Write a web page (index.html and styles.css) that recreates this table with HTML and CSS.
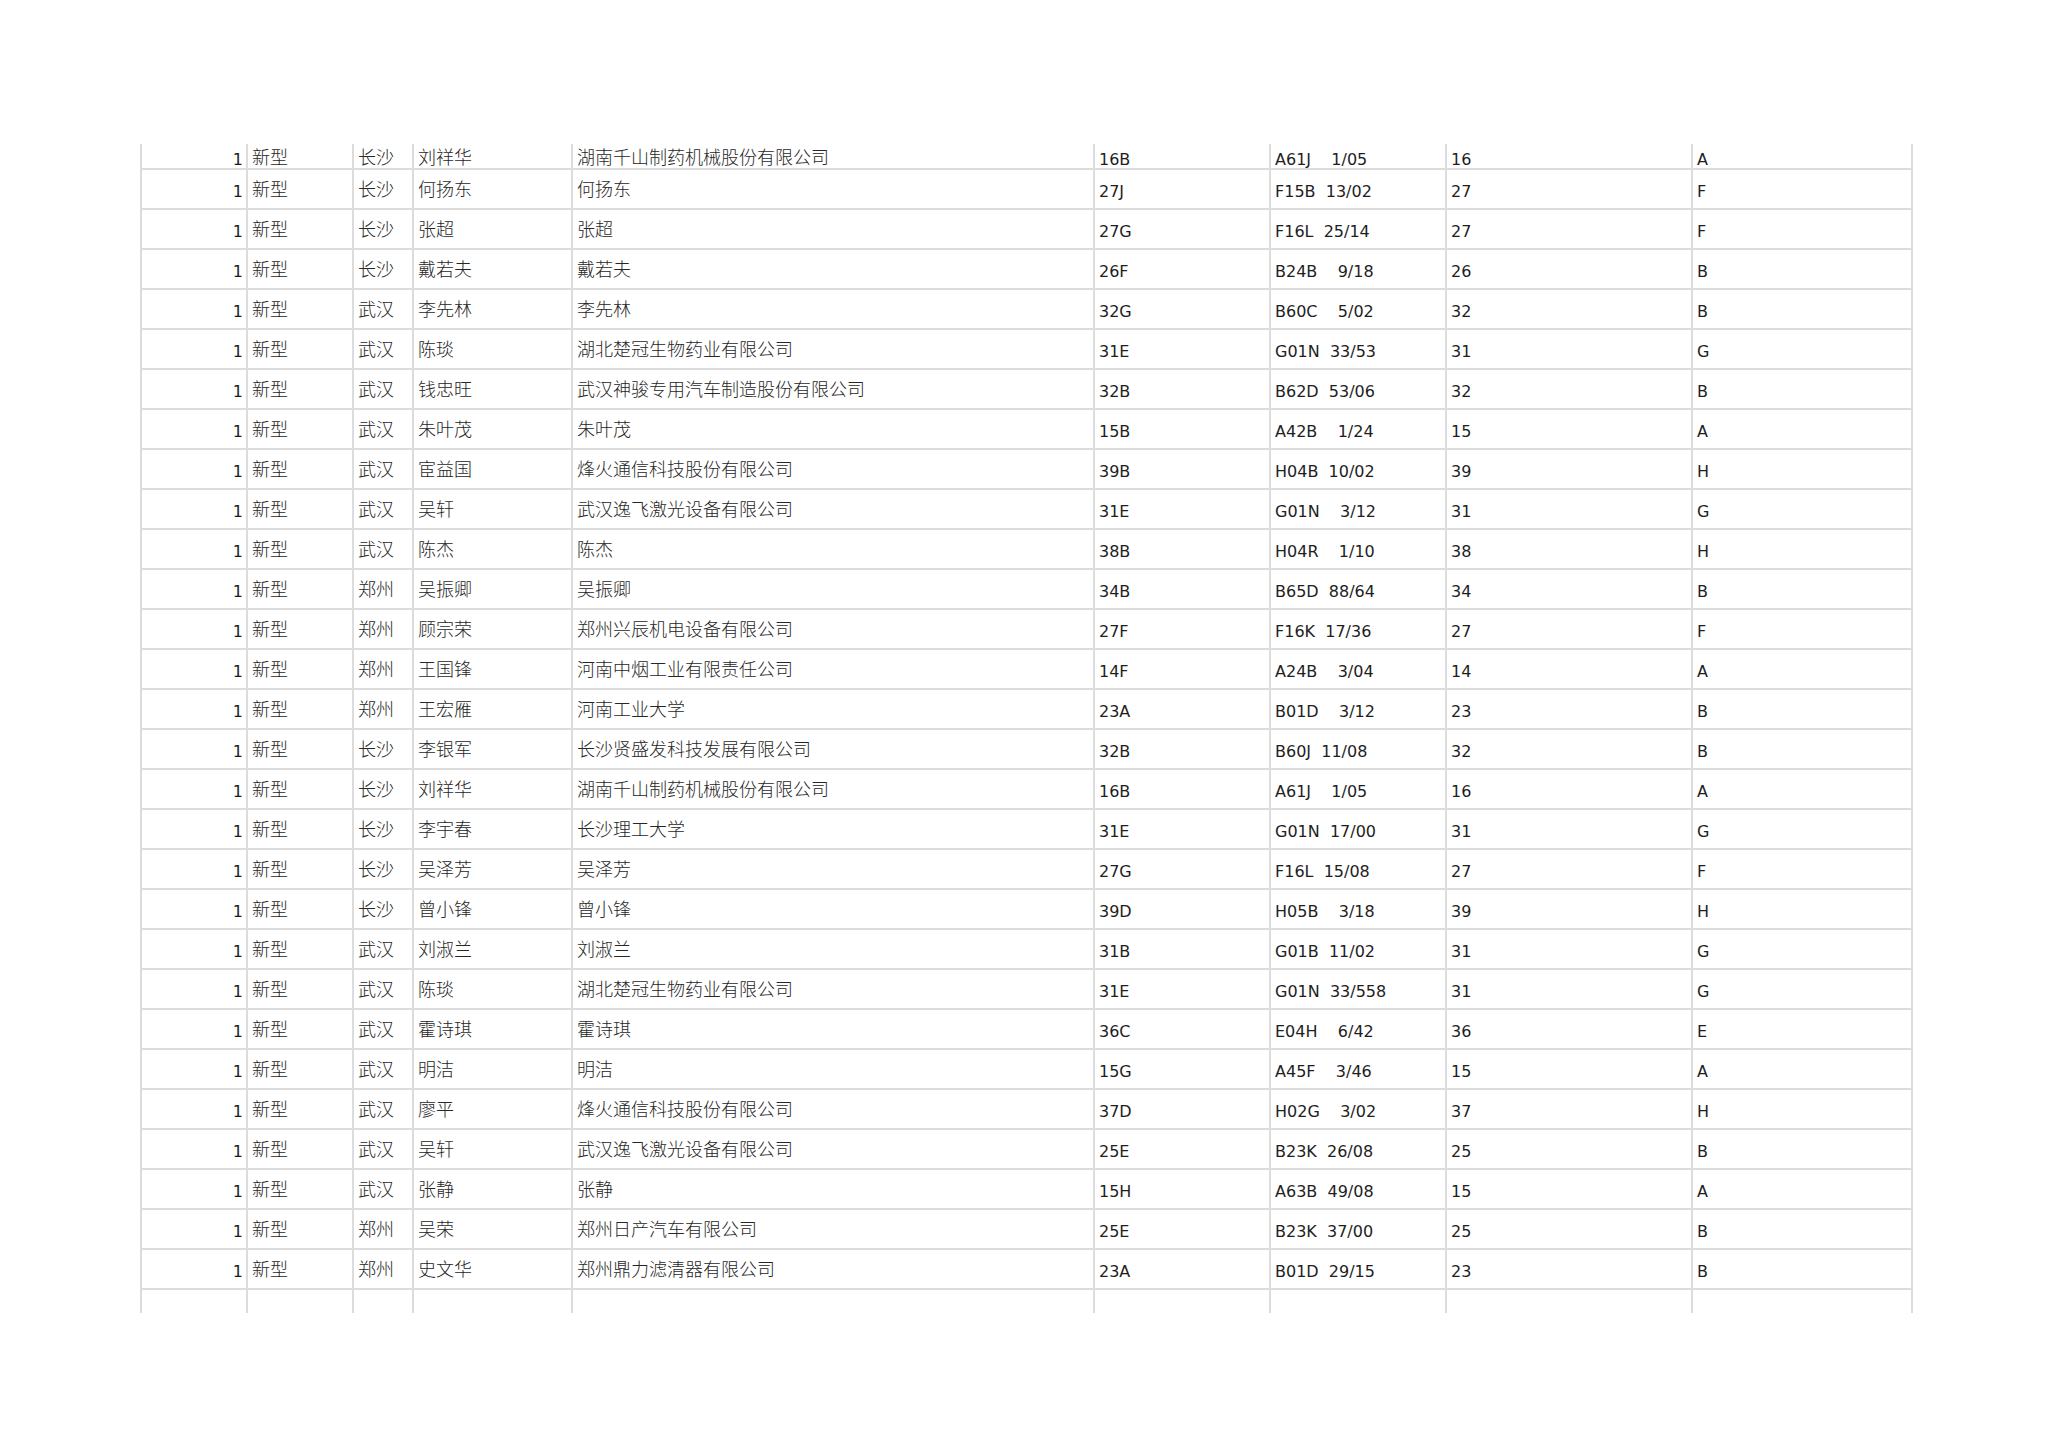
FILE: index.html
```html
<!DOCTYPE html>
<html lang="zh-CN">
<head>
<meta charset="utf-8">
<title>专利清单</title>
<link rel="stylesheet" href="styles.css">
</head>
<body>
<div class="sheet">
  <div class="row first"><div class="c num">1</div><div class="c cjk">新型</div><div class="c cjk">长沙</div><div class="c cjk">刘祥华</div><div class="c cjk">湖南千山制药机械股份有限公司</div><div class="c lat">16B</div><div class="c lat">A61J    1/05</div><div class="c lat">16</div><div class="c lat end">A</div></div>
  <div class="row"><div class="c num">1</div><div class="c cjk">新型</div><div class="c cjk">长沙</div><div class="c cjk">何扬东</div><div class="c cjk">何扬东</div><div class="c lat">27J</div><div class="c lat">F15B  13/02</div><div class="c lat">27</div><div class="c lat end">F</div></div>
  <div class="row"><div class="c num">1</div><div class="c cjk">新型</div><div class="c cjk">长沙</div><div class="c cjk">张超</div><div class="c cjk">张超</div><div class="c lat">27G</div><div class="c lat">F16L  25/14</div><div class="c lat">27</div><div class="c lat end">F</div></div>
  <div class="row"><div class="c num">1</div><div class="c cjk">新型</div><div class="c cjk">长沙</div><div class="c cjk">戴若夫</div><div class="c cjk">戴若夫</div><div class="c lat">26F</div><div class="c lat">B24B    9/18</div><div class="c lat">26</div><div class="c lat end">B</div></div>
  <div class="row"><div class="c num">1</div><div class="c cjk">新型</div><div class="c cjk">武汉</div><div class="c cjk">李先林</div><div class="c cjk">李先林</div><div class="c lat">32G</div><div class="c lat">B60C    5/02</div><div class="c lat">32</div><div class="c lat end">B</div></div>
  <div class="row"><div class="c num">1</div><div class="c cjk">新型</div><div class="c cjk">武汉</div><div class="c cjk">陈琰</div><div class="c cjk">湖北楚冠生物药业有限公司</div><div class="c lat">31E</div><div class="c lat">G01N  33/53</div><div class="c lat">31</div><div class="c lat end">G</div></div>
  <div class="row"><div class="c num">1</div><div class="c cjk">新型</div><div class="c cjk">武汉</div><div class="c cjk">钱忠旺</div><div class="c cjk">武汉神骏专用汽车制造股份有限公司</div><div class="c lat">32B</div><div class="c lat">B62D  53/06</div><div class="c lat">32</div><div class="c lat end">B</div></div>
  <div class="row"><div class="c num">1</div><div class="c cjk">新型</div><div class="c cjk">武汉</div><div class="c cjk">朱叶茂</div><div class="c cjk">朱叶茂</div><div class="c lat">15B</div><div class="c lat">A42B    1/24</div><div class="c lat">15</div><div class="c lat end">A</div></div>
  <div class="row"><div class="c num">1</div><div class="c cjk">新型</div><div class="c cjk">武汉</div><div class="c cjk">宦益国</div><div class="c cjk">烽火通信科技股份有限公司</div><div class="c lat">39B</div><div class="c lat">H04B  10/02</div><div class="c lat">39</div><div class="c lat end">H</div></div>
  <div class="row"><div class="c num">1</div><div class="c cjk">新型</div><div class="c cjk">武汉</div><div class="c cjk">吴轩</div><div class="c cjk">武汉逸飞激光设备有限公司</div><div class="c lat">31E</div><div class="c lat">G01N    3/12</div><div class="c lat">31</div><div class="c lat end">G</div></div>
  <div class="row"><div class="c num">1</div><div class="c cjk">新型</div><div class="c cjk">武汉</div><div class="c cjk">陈杰</div><div class="c cjk">陈杰</div><div class="c lat">38B</div><div class="c lat">H04R    1/10</div><div class="c lat">38</div><div class="c lat end">H</div></div>
  <div class="row"><div class="c num">1</div><div class="c cjk">新型</div><div class="c cjk">郑州</div><div class="c cjk">吴振卿</div><div class="c cjk">吴振卿</div><div class="c lat">34B</div><div class="c lat">B65D  88/64</div><div class="c lat">34</div><div class="c lat end">B</div></div>
  <div class="row"><div class="c num">1</div><div class="c cjk">新型</div><div class="c cjk">郑州</div><div class="c cjk">顾宗荣</div><div class="c cjk">郑州兴辰机电设备有限公司</div><div class="c lat">27F</div><div class="c lat">F16K  17/36</div><div class="c lat">27</div><div class="c lat end">F</div></div>
  <div class="row"><div class="c num">1</div><div class="c cjk">新型</div><div class="c cjk">郑州</div><div class="c cjk">王国锋</div><div class="c cjk">河南中烟工业有限责任公司</div><div class="c lat">14F</div><div class="c lat">A24B    3/04</div><div class="c lat">14</div><div class="c lat end">A</div></div>
  <div class="row"><div class="c num">1</div><div class="c cjk">新型</div><div class="c cjk">郑州</div><div class="c cjk">王宏雁</div><div class="c cjk">河南工业大学</div><div class="c lat">23A</div><div class="c lat">B01D    3/12</div><div class="c lat">23</div><div class="c lat end">B</div></div>
  <div class="row"><div class="c num">1</div><div class="c cjk">新型</div><div class="c cjk">长沙</div><div class="c cjk">李银军</div><div class="c cjk">长沙贤盛发科技发展有限公司</div><div class="c lat">32B</div><div class="c lat">B60J  11/08</div><div class="c lat">32</div><div class="c lat end">B</div></div>
  <div class="row"><div class="c num">1</div><div class="c cjk">新型</div><div class="c cjk">长沙</div><div class="c cjk">刘祥华</div><div class="c cjk">湖南千山制药机械股份有限公司</div><div class="c lat">16B</div><div class="c lat">A61J    1/05</div><div class="c lat">16</div><div class="c lat end">A</div></div>
  <div class="row"><div class="c num">1</div><div class="c cjk">新型</div><div class="c cjk">长沙</div><div class="c cjk">李宇春</div><div class="c cjk">长沙理工大学</div><div class="c lat">31E</div><div class="c lat">G01N  17/00</div><div class="c lat">31</div><div class="c lat end">G</div></div>
  <div class="row"><div class="c num">1</div><div class="c cjk">新型</div><div class="c cjk">长沙</div><div class="c cjk">吴泽芳</div><div class="c cjk">吴泽芳</div><div class="c lat">27G</div><div class="c lat">F16L  15/08</div><div class="c lat">27</div><div class="c lat end">F</div></div>
  <div class="row"><div class="c num">1</div><div class="c cjk">新型</div><div class="c cjk">长沙</div><div class="c cjk">曾小锋</div><div class="c cjk">曾小锋</div><div class="c lat">39D</div><div class="c lat">H05B    3/18</div><div class="c lat">39</div><div class="c lat end">H</div></div>
  <div class="row"><div class="c num">1</div><div class="c cjk">新型</div><div class="c cjk">武汉</div><div class="c cjk">刘淑兰</div><div class="c cjk">刘淑兰</div><div class="c lat">31B</div><div class="c lat">G01B  11/02</div><div class="c lat">31</div><div class="c lat end">G</div></div>
  <div class="row"><div class="c num">1</div><div class="c cjk">新型</div><div class="c cjk">武汉</div><div class="c cjk">陈琰</div><div class="c cjk">湖北楚冠生物药业有限公司</div><div class="c lat">31E</div><div class="c lat">G01N  33/558</div><div class="c lat">31</div><div class="c lat end">G</div></div>
  <div class="row"><div class="c num">1</div><div class="c cjk">新型</div><div class="c cjk">武汉</div><div class="c cjk">霍诗琪</div><div class="c cjk">霍诗琪</div><div class="c lat">36C</div><div class="c lat">E04H    6/42</div><div class="c lat">36</div><div class="c lat end">E</div></div>
  <div class="row"><div class="c num">1</div><div class="c cjk">新型</div><div class="c cjk">武汉</div><div class="c cjk">明洁</div><div class="c cjk">明洁</div><div class="c lat">15G</div><div class="c lat">A45F    3/46</div><div class="c lat">15</div><div class="c lat end">A</div></div>
  <div class="row"><div class="c num">1</div><div class="c cjk">新型</div><div class="c cjk">武汉</div><div class="c cjk">廖平</div><div class="c cjk">烽火通信科技股份有限公司</div><div class="c lat">37D</div><div class="c lat">H02G    3/02</div><div class="c lat">37</div><div class="c lat end">H</div></div>
  <div class="row"><div class="c num">1</div><div class="c cjk">新型</div><div class="c cjk">武汉</div><div class="c cjk">吴轩</div><div class="c cjk">武汉逸飞激光设备有限公司</div><div class="c lat">25E</div><div class="c lat">B23K  26/08</div><div class="c lat">25</div><div class="c lat end">B</div></div>
  <div class="row"><div class="c num">1</div><div class="c cjk">新型</div><div class="c cjk">武汉</div><div class="c cjk">张静</div><div class="c cjk">张静</div><div class="c lat">15H</div><div class="c lat">A63B  49/08</div><div class="c lat">15</div><div class="c lat end">A</div></div>
  <div class="row"><div class="c num">1</div><div class="c cjk">新型</div><div class="c cjk">郑州</div><div class="c cjk">吴荣</div><div class="c cjk">郑州日产汽车有限公司</div><div class="c lat">25E</div><div class="c lat">B23K  37/00</div><div class="c lat">25</div><div class="c lat end">B</div></div>
  <div class="row"><div class="c num">1</div><div class="c cjk">新型</div><div class="c cjk">郑州</div><div class="c cjk">史文华</div><div class="c cjk">郑州鼎力滤清器有限公司</div><div class="c lat">23A</div><div class="c lat">B01D  29/15</div><div class="c lat">23</div><div class="c lat end">B</div></div>
  <div class="row tail"><div class="c num"></div><div class="c cjk"></div><div class="c cjk"></div><div class="c cjk"></div><div class="c cjk"></div><div class="c lat"></div><div class="c lat"></div><div class="c lat"></div><div class="c lat end"></div></div>
</div>
</body>
</html>
```

FILE: styles.css
```css
html, body {
  margin: 0;
  padding: 0;
  background: #ffffff;
}

.sheet {
  margin: 144px 0 0 140px;
  width: 1773px;
  color: #1e1e1e;
  font-family: "DejaVu Sans", "Noto Sans CJK SC", sans-serif;
}

.row {
  display: grid;
  grid-template-columns: 106px 106px 60px 159px 522px 176px 176px 246px 222px;
  box-sizing: border-box;
  height: 40px;
  border-bottom: 2px solid #dcdcdc;
}

.row.first {
  height: 26px;
}

.row.tail {
  height: 23px;
  border-bottom: none;
}

.c {
  box-sizing: border-box;
  border-left: 2px solid #dcdcdc;
  padding: 0 4px;
  white-space: pre;
}

.c.end {
  border-right: 2px solid #dcdcdc;
}

.num {
  text-align: right;
  padding-right: 3px;
  font-family: "DejaVu Sans", sans-serif;
  font-size: 16px;
  line-height: 43px;
}

.lat {
  font-family: "DejaVu Sans", sans-serif;
  font-size: 16px;
  line-height: 43px;
}

.cjk {
  font-family: "Noto Sans CJK SC", sans-serif;
  font-size: 18px;
  font-weight: 300;
  line-height: 37.5px;
  color: #262626;
}

.first .num,
.first .lat {
  line-height: 31px;
}

.first .cjk {
  line-height: 25px;
}
```
